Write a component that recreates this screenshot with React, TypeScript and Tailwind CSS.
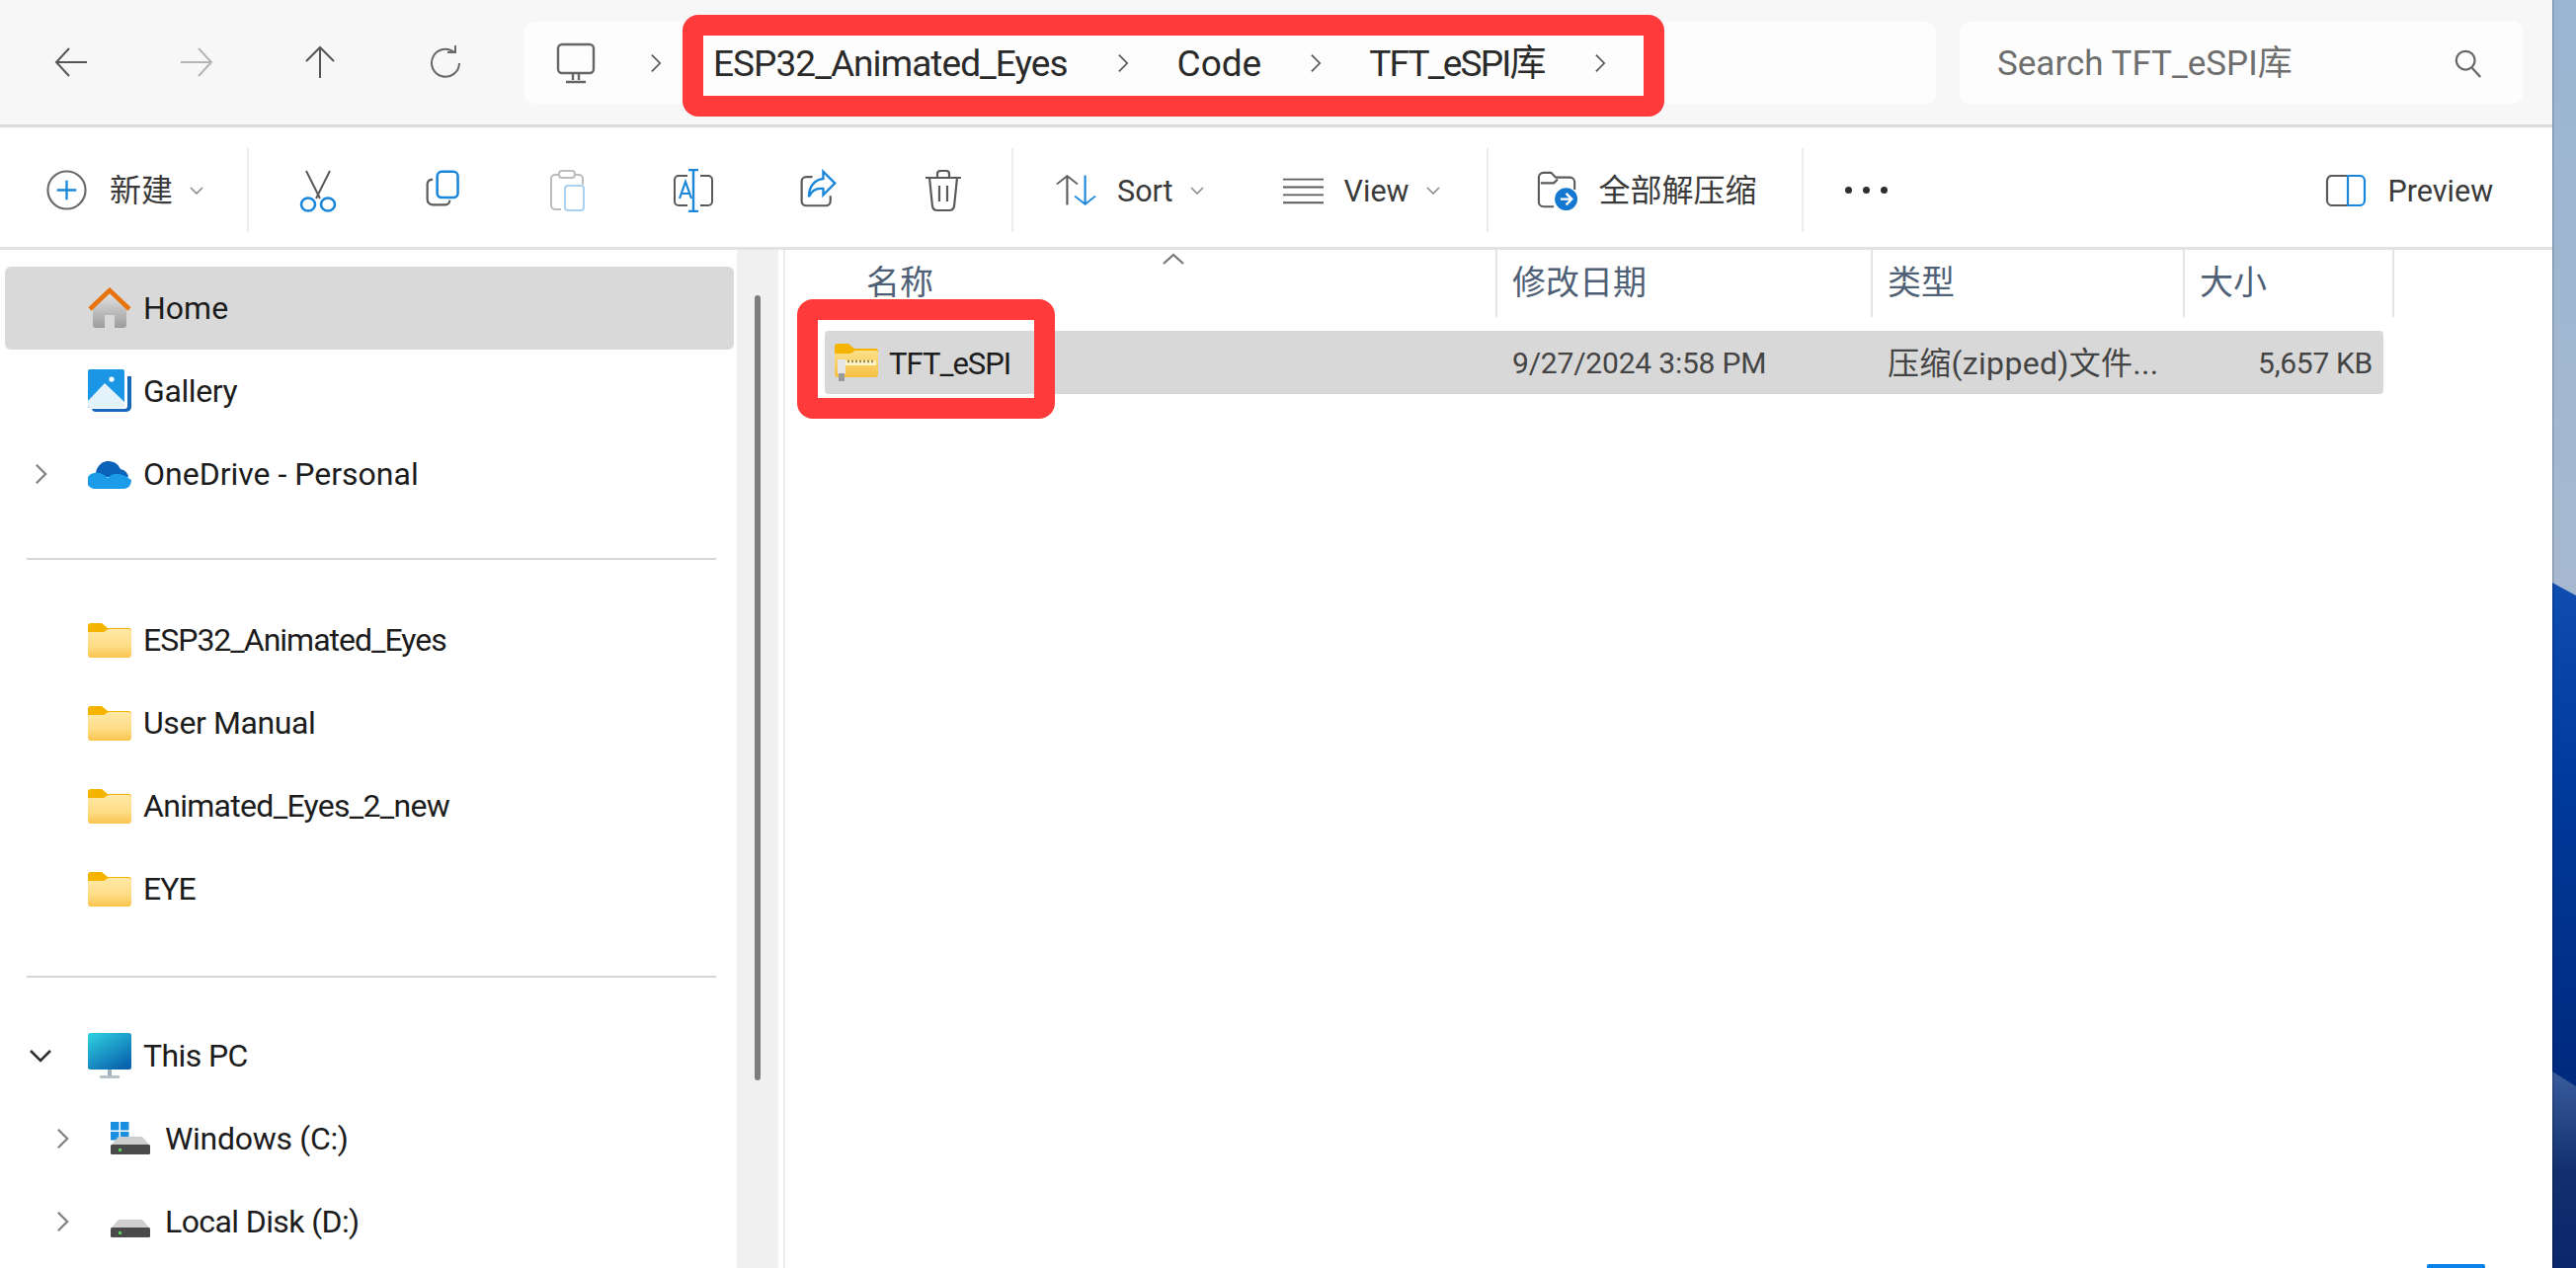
const FONT = "font-['Roboto','Noto_Sans_CJK_SC',sans-serif]";

function Chevron({ className = '', stroke = '#555', width = 2 }: { className?: string; stroke?: string; width?: number }) {
  return (
    <svg viewBox="0 0 14 24" className={className} fill="none" stroke={stroke} strokeWidth={width}>
      <path d="M2 2l10 10L2 22" />
    </svg>
  );
}

function Caret() {
  return (
    <svg viewBox="0 0 14 8" className="w-[14px] h-[8px] ml-[17px]" fill="none" stroke="#8a8a8a" strokeWidth="1.6">
      <path d="M1 1l6 6 6-6" />
    </svg>
  );
}

function FolderIcon() {
  return (
    <svg viewBox="0 0 44 35" className="w-[44px] h-[35px] shrink-0">
      <defs>
        <linearGradient id="fold" x1="0" y1="0" x2="0" y2="1">
          <stop offset="0" stopColor="#ffe9a6" />
          <stop offset="0.6" stopColor="#fedc86" />
          <stop offset="1" stopColor="#fac44e" />
        </linearGradient>
      </defs>
      <path d="M0 3a3 3 0 0 1 3-3h11l6 5h21a3 3 0 0 1 3 3v6H0z" fill="#f4b400" />
      <path d="M0 9l16 0 5-3h20a3 3 0 0 1 3 3v23a3 3 0 0 1-3 3H3a3 3 0 0 1-3-3z" fill="url(#fold)" />
    </svg>
  );
}

function HomeIcon() {
  return (
    <svg viewBox="0 0 44 42" className="w-[44px] h-[42px] shrink-0">
      <defs>
        <linearGradient id="homeb" x1="0" y1="0" x2="0" y2="1">
          <stop offset="0" stopColor="#e8e8e8" />
          <stop offset="1" stopColor="#9c9c9c" />
        </linearGradient>
      </defs>
      <path d="M22 3L5 21v17a3 3 0 0 0 3 3h9V28h10v13h9a3 3 0 0 0 3-3V21z" fill="url(#homeb)" />
      <path d="M2 22L22 3l20 19" fill="none" stroke="#e8730c" strokeWidth="4.5" />
    </svg>
  );
}

function GalleryIcon() {
  return (
    <svg viewBox="0 0 44 44" className="w-[44px] h-[44px] shrink-0">
      <path d="M4 40h33a3 3 0 0 0 3-3V7h4v31a5 5 0 0 1-5 5H8a4 4 0 0 1-4-3z" fill="#1668b8" />
      <rect x="0" y="0" width="37" height="39" rx="2" fill="#1b96e4" />
      <path d="M0 32l17-18 20 19v6H2a2 2 0 0 1-2-2z" fill="#e4f2fc" />
      <circle cx="24" cy="10" r="2.6" fill="#fff" />
    </svg>
  );
}

function CloudIcon() {
  return (
    <svg viewBox="0 0 44 30" className="w-[44px] h-[30px] shrink-0">
      <path d="M8 14a13 13 0 0 1 25-4 10 10 0 0 1 8 8H10z" fill="#0a63b8" />
      <path d="M8 30a8 8 0 0 1-2-16c6-1 10 1 14 5 5-6 14-6 24 2 0 5-3 9-8 9z" fill="#1c9ce8" />
    </svg>
  );
}

function PcIcon() {
  return (
    <svg viewBox="0 0 44 46" className="w-[44px] h-[46px] shrink-0">
      <defs>
        <linearGradient id="pc" x1="0" y1="0" x2="0.7" y2="1">
          <stop offset="0" stopColor="#30d3e0" />
          <stop offset="1" stopColor="#0a65b0" />
        </linearGradient>
      </defs>
      <rect x="0" y="0" width="44" height="37" rx="2.5" fill="url(#pc)" />
      <rect x="20" y="37" width="4" height="7" fill="#9fb3bd" />
      <rect x="12" y="43" width="20" height="3" rx="1" fill="#b5c2c9" />
    </svg>
  );
}

function DiskIcon({ win }: { win?: boolean }) {
  return (
    <svg viewBox="0 0 40 34" className="w-[40px] h-[34px] shrink-0">
      {win && (
        <g fill="#1c8ee0">
          <rect x="0" y="0" width="8.5" height="8.5" />
          <rect x="10" y="0" width="8.5" height="8.5" />
          <rect x="0" y="10" width="8.5" height="8.5" />
          <rect x="10" y="10" width="8.5" height="8.5" />
        </g>
      )}
      <path d="M8 15h24l8 9H0z" fill="#cfcfcf" />
      <rect x="0" y="23" width="40" height="10" rx="1.5" fill="#4a4a4a" />
      <rect x="8" y="27" width="3" height="3" fill="#58d058" />
    </svg>
  );
}

function ZipIcon() {
  return (
    <svg viewBox="0 0 44 38" className="w-[44px] h-[38px] shrink-0">
      <defs>
        <linearGradient id="zip" x1="0" y1="0" x2="0" y2="1">
          <stop offset="0" stopColor="#fde08a" />
          <stop offset="1" stopColor="#f6bf42" />
        </linearGradient>
      </defs>
      <path d="M0 3a3 3 0 0 1 3-3h11l6 5h21a3 3 0 0 1 3 3v6H0z" fill="#f4b400" />
      <path d="M0 10h16l5-3h20a3 3 0 0 1 3 3v21a3 3 0 0 1-3 3H3a3 3 0 0 1-3-3z" fill="url(#zip)" />
      <rect x="8" y="17" width="34" height="5" fill="#fff3c8" />
      <path d="M9 18h32" stroke="#9a8a50" strokeWidth="2.4" strokeDasharray="2 2" />
      <rect x="3" y="16" width="8" height="15" fill="#e6e6e6" />
      <rect x="4" y="30" width="6" height="8" fill="#9a9a9a" />
    </svg>
  );
}

const GRAY = '#5a5a5a';
const BLUE = '#1a86da';

function ToolIcon({ name }: { name: string }) {
  const common = 'w-[44px] h-[44px]';
  const small = 'w-[40px] h-[40px]';
  if (name === 'cut')
    return (
      <svg viewBox="0 0 44 44" className={common} fill="none" strokeWidth="2">
        <path d="M10 2l14 28M34 2L20 30" stroke={GRAY} />
        <ellipse cx="12" cy="36" rx="7" ry="6.5" stroke={BLUE} strokeWidth="2.6" />
        <ellipse cx="32" cy="36" rx="7" ry="6.5" stroke={BLUE} strokeWidth="2.6" />
      </svg>
    );
  if (name === 'copy')
    return (
      <svg viewBox="0 0 44 44" className={small} fill="none" strokeWidth="2.4">
        <path d="M10 12a5 5 0 0 0-6 5v17a6 6 0 0 0 6 6h14a5 5 0 0 0 5-5" stroke={GRAY} />
        <rect x="15" y="3" width="23" height="29" rx="5" stroke={BLUE} strokeWidth="2.8" />
      </svg>
    );
  if (name === 'paste')
    return (
      <svg viewBox="0 0 44 44" className={common} fill="none" strokeWidth="2">
        <path d="M12 6H9a4 4 0 0 0-4 4v27a4 4 0 0 0 4 4h6M30 6h3a4 4 0 0 1 4 4v6" stroke="#bcbcbc" />
        <rect x="13" y="2" width="16" height="7" rx="3" stroke="#bcbcbc" />
        <rect x="19" y="17" width="19" height="25" rx="3" stroke="#a9d2f2" />
      </svg>
    );
  if (name === 'rename')
    return (
      <svg viewBox="0 0 44 44" className={common} fill="none" strokeWidth="2">
        <path d="M16 7H7a4 4 0 0 0-4 4v22a4 4 0 0 0 4 4h9M29 7h8a4 4 0 0 1 4 4v22a4 4 0 0 1-4 4h-8" stroke={GRAY} />
        <path d="M17 1h10M22 1v42M17 43h10" stroke={BLUE} strokeWidth="2.4" />
        <path d="M8 30l6-17 6 17M10 25h8" stroke={BLUE} strokeWidth="2.2" />
      </svg>
    );
  if (name === 'share')
    return (
      <svg viewBox="0 0 44 44" className={small} fill="none" strokeWidth="2.4">
        <path d="M16 9H9a5 5 0 0 0-5 5v22a5 5 0 0 0 5 5h22a5 5 0 0 0 5-5v-6" stroke={GRAY} />
        <path d="M28 3l13 13-13 13v-7c-8-1-13 2-16 9 0-11 6-19 16-20z" stroke={BLUE} strokeWidth="2.6" />
      </svg>
    );
  if (name === 'trash')
    return (
      <svg viewBox="0 0 44 44" className={common} fill="none" stroke={GRAY} strokeWidth="2.2">
        <path d="M4 9h36M16 8V5a3 3 0 0 1 3-3h6a3 3 0 0 1 3 3v3M8 9l3 29a5 5 0 0 0 5 4h12a5 5 0 0 0 5-4l3-29M18 17v16M26 17v16" />
      </svg>
    );
  return null;
}

function Sep() {
  return <div className="w-[2px] h-[85px] bg-[#ececec] shrink-0" />;
}

function TopBar() {
  const crumb = `${FONT} mt-[2px] text-[37px] leading-none text-[#2a2a2a]`;
  return (
    <div className="h-[129px] shrink-0 flex bg-[#f7f7f7] border-b-[3px] border-[#dadada] pl-[8px]">
      <div className="w-[127px] h-[126px] flex items-center justify-center">
        <svg viewBox="0 0 34 30" className="w-[34px] h-[30px]" fill="none" stroke="#555" strokeWidth="2">
          <path d="M33 15H2M15 1L2 15l13 14" />
        </svg>
      </div>
      <div className="w-[127px] h-[126px] flex items-center justify-center">
        <svg viewBox="0 0 34 30" className="w-[34px] h-[30px]" fill="none" stroke="#b4b4b4" strokeWidth="2">
          <path d="M1 15h31M19 1l13 14-13 14" />
        </svg>
      </div>
      <div className="w-[127px] h-[126px] flex items-center justify-center pr-[4px]">
        <svg viewBox="0 0 32 34" className="w-[32px] h-[34px]" fill="none" stroke="#555" strokeWidth="2">
          <path d="M16 33V2M2 16L16 2l14 14" />
        </svg>
      </div>
      <div className="w-[127px] h-[126px] flex items-center justify-center pr-[4px]">
        <svg viewBox="0 0 32 34" className="w-[32px] h-[34px]" fill="none" stroke="#666" strokeWidth="2">
          <path d="M25 7A14 14 0 1 0 30 18" />
          <path d="M18 7h8V0" />
        </svg>
      </div>
      <div className="ml-[15px] mt-[22px] w-[1429px] h-[83px] rounded-[10px] bg-[#fdfdfd] flex items-center">
        <svg viewBox="0 0 40 42" className="w-[40px] h-[42px] ml-[32px]" fill="none" stroke="#666" strokeWidth="2.4">
          <rect x="2" y="2" width="36" height="29" rx="4" />
          <path d="M17 32v6M23 32v6M10 40h20" />
        </svg>
        <Chevron className="w-[12px] h-[20px] ml-[55px]" />
        <span className={`${crumb} ml-[52px] tracking-[-0.95px]`}>ESP32_Animated_Eyes</span>
        <Chevron className="w-[12px] h-[20px] ml-[50px]" />
        <span className={`${crumb} ml-[49px]`}>Code</span>
        <Chevron className="w-[12px] h-[20px] ml-[49px]" />
        <span className={`${crumb} ml-[48px] tracking-[-1.8px]`}>TFT_eSPI库</span>
        <Chevron className="w-[12px] h-[20px] ml-[50px]" />
      </div>
      <div className="ml-[24px] mt-[22px] w-[570px] h-[83px] rounded-[10px] bg-[#fdfdfd] flex items-center justify-between pl-[38px] pr-[40px]">
        <span className={`${FONT} mt-[2px] text-[35px] leading-none text-[#6e6e6e]`}>Search TFT_eSPI库</span>
        <svg viewBox="0 0 32 32" className="w-[30px] h-[30px]" fill="none" stroke="#666" strokeWidth="2.4">
          <circle cx="13" cy="13" r="10" />
          <path d="M20 21l9 10" />
        </svg>
      </div>
    </div>
  );
}

function ToolBar() {
  const text = `${FONT} text-[30.5px] leading-none text-[#3a3a3a]`;
  return (
    <div className="h-[124px] shrink-0 flex items-center bg-white border-b-[3px] border-[#e2e2e2] pt-[6px]">
      <svg viewBox="0 0 42 42" className="w-[41px] h-[41px] ml-[47px]" fill="none">
        <circle cx="21" cy="21" r="19.5" stroke="#6a6a6a" strokeWidth="2.2" />
        <path d="M21 11v20M11 21h20" stroke={BLUE} strokeWidth="2.4" />
      </svg>
      <span className={`${FONT} ml-[23px] text-[32px] leading-none text-[#3a3a3a]`}>新建</span>
      <Caret />
      <div className="w-[44px] shrink-0" />
      <Sep />
      <div className="flex ml-[7px]">
        {['cut', 'copy', 'paste', 'rename', 'share', 'trash'].map((n) => (
          <div key={n} className="w-[126.5px] flex justify-center">
            <ToolIcon name={n} />
          </div>
        ))}
      </div>
      <div className="ml-[6px]">
        <Sep />
      </div>
      <svg viewBox="0 0 46 44" preserveAspectRatio="none" className="w-[44px] h-[33px] ml-[42px]" fill="none" strokeWidth="2.2">
        <path d="M13 42V3M2 14L13 3l11 11" stroke={GRAY} />
        <path d="M32 2v39M21 30l11 11 11-11" stroke={BLUE} />
      </svg>
      <span className={`${text} ml-[19px] mt-[3px]`}>Sort</span>
      <Caret />
      <svg viewBox="0 0 44 32" preserveAspectRatio="none" className="w-[43px] h-[28px] ml-[79px]" fill="none" stroke={GRAY} strokeWidth="2.2">
        <path d="M1 3h42M1 12h42M1 21h42M1 30h42" />
      </svg>
      <span className={`${text} ml-[20px] mt-[3px]`}>View</span>
      <Caret />
      <div className="w-[47px] shrink-0" />
      <Sep />
      <svg viewBox="0 0 44 44" className="w-[42px] h-[42px] ml-[49px]" fill="none">
        <path d="M18 39H7a5 5 0 0 1-5-5V8a5 5 0 0 1 5-5h8l5 5h15a5 5 0 0 1 5 5v8" stroke={GRAY} strokeWidth="2.2" />
        <path d="M4 14h14l4-4" stroke={GRAY} strokeWidth="2.2" />
        <circle cx="31" cy="31" r="12" fill="#1478d0" />
        <path d="M25 31h11M31 25l6 6-6 6" stroke="#fff" strokeWidth="2.4" />
      </svg>
      <span className={`${FONT} ml-[21px] text-[32px] leading-none text-[#3a3a3a]`}>全部解压缩</span>
      <div className="ml-[45px]">
        <Sep />
      </div>
      <div className="ml-[42px] flex gap-[11px]">
        <div className="w-[7px] h-[7px] rounded-full bg-[#2e2e2e]" />
        <div className="w-[7px] h-[7px] rounded-full bg-[#2e2e2e]" />
        <div className="w-[7px] h-[7px] rounded-full bg-[#2e2e2e]" />
      </div>
      <svg viewBox="0 0 42 32" className="w-[42px] h-[32px] ml-[443px]" fill="none" strokeWidth="2.2">
        <path d="M23 1H7a5 5 0 0 0-5 5v20a5 5 0 0 0 5 5h16" stroke={GRAY} />
        <path d="M23 1h12a5 5 0 0 1 5 5v20a5 5 0 0 1-5 5H23z" stroke={BLUE} />
      </svg>
      <span className={`${text} ml-[22px] mt-[3px]`}>Preview</span>
    </div>
  );
}

function NavRow({
  label,
  icon,
  chevron,
  level = 1,
  selected,
  tracking = '',
}: {
  label: string;
  icon: React.ReactNode;
  chevron?: 'right' | 'down';
  level?: number;
  selected?: boolean;
  tracking?: string;
}) {
  return (
    <div className={`ml-[5px] w-[738px] h-[84px] flex items-center rounded-[6px] ${selected ? 'bg-[#d9d9d9]' : ''}`}>
      <div className={`${level === 2 ? 'w-[107px] pl-[52px]' : 'w-[84px] pl-[30px]'} shrink-0 flex items-center`}>
        {chevron === 'right' && <Chevron className="w-[13px] h-[26px]" stroke="#808080" width={2.4} />}
        {chevron === 'down' && (
          <svg viewBox="0 0 24 14" className="w-[24px] h-[14px] -ml-[6px]" fill="none" stroke="#2f2f2f" strokeWidth="2.6">
            <path d="M2 2l10 10L22 2" />
          </svg>
        )}
      </div>
      {icon}
      <span className={`${FONT} ${level === 2 ? 'ml-[15px]' : 'ml-[12px]'} text-[32px] leading-none text-[#1c1c1c] ${tracking}`}>{label}</span>
    </div>
  );
}

function Sidebar() {
  return (
    <div className="w-[746px] shrink-0 flex flex-col pt-[17px] bg-white">
      <NavRow label="Home" icon={<HomeIcon />} selected />
      <NavRow label="Gallery" icon={<GalleryIcon />} tracking="tracking-[-0.4px]" />
      <NavRow label="OneDrive - Personal" icon={<CloudIcon />} chevron="right" />
      <div className="ml-[27px] mr-[21px] mt-[43px] h-[2px] bg-[#d8d8d8] shrink-0" />
      <div className="mt-[39px]" />
      <NavRow label="ESP32_Animated_Eyes" icon={<FolderIcon />} tracking="tracking-[-1px]" />
      <NavRow label="User Manual" icon={<FolderIcon />} tracking="tracking-[-0.4px]" />
      <NavRow label="Animated_Eyes_2_new" icon={<FolderIcon />} tracking="tracking-[-0.7px]" />
      <NavRow label="EYE" icon={<FolderIcon />} tracking="tracking-[-1px]" />
      <div className="ml-[27px] mr-[21px] mt-[46px] h-[2px] bg-[#d8d8d8] shrink-0" />
      <div className="mt-[37px]" />
      <NavRow label="This PC" icon={<PcIcon />} chevron="down" tracking="tracking-[-0.6px]" />
      <NavRow label="Windows (C:)" icon={<DiskIcon win />} chevron="right" level={2} tracking="tracking-[-0.3px]" />
      <NavRow label="Local Disk (D:)" icon={<DiskIcon />} chevron="right" level={2} tracking="tracking-[-0.6px]" />
    </div>
  );
}

function FileList() {
  const head = `${FONT} mb-[3px] text-[34px] leading-none text-[#4f5f75]`;
  const cell = `${FONT} mt-[2px] text-[30px] leading-none text-[#444]`;
  return (
    <div className="relative flex-1 flex flex-col ml-[5px] border-l-[2px] border-[#ececec] bg-white">
      <div className="h-[68px] shrink-0 flex">
        <div className="relative w-[721px] border-r-[2px] border-[#e4e4e4] flex items-center pl-[82px]">
          <span className={head}>名称</span>
          <svg viewBox="0 0 22 12" className="absolute left-[382px] top-[3px] w-[22px] h-[12px]" fill="none" stroke="#777" strokeWidth="2.2">
            <path d="M1 11L11 2l10 9" />
          </svg>
        </div>
        <div className="w-[380px] border-r-[2px] border-[#e4e4e4] flex items-center pl-[15px]">
          <span className={head}>修改日期</span>
        </div>
        <div className="w-[316px] border-r-[2px] border-[#e4e4e4] flex items-center pl-[15px]">
          <span className={head}>类型</span>
        </div>
        <div className="w-[212px] border-r-[2px] border-[#e4e4e4] flex items-center pl-[15px]">
          <span className={head}>大小</span>
        </div>
      </div>
      <div className="mt-[14px] ml-[40px] w-[1578px] h-[64px] shrink-0 rounded-[4px] bg-[#d8d8d8] flex items-center">
        <div className="w-[696px] shrink-0 flex items-center pl-[10px]">
          <ZipIcon />
          <span className={`${FONT} ml-[11px] mt-[2px] text-[31px] leading-none tracking-[-1px] text-[#1c1c1c]`}>TFT_eSPI</span>
        </div>
        <div className={`${cell} w-[380px] shrink-0 tracking-[-0.2px]`}>9/27/2024 3:58 PM</div>
        <div className={`${FONT} mt-[2px] text-[32px] leading-none tracking-[0.3px] text-[#444] w-[290px] shrink-0`}>压缩(zipped)文件...</div>
        <div className={`${cell} flex-1 text-right pr-[11px] tracking-[-0.3px]`}>5,657 KB</div>
      </div>
    </div>
  );
}

function Wallpaper() {
  return (
    <svg viewBox="0 0 24 1284" preserveAspectRatio="none" className="w-[24px] h-[1284px] shrink-0 block">
      <defs>
        <linearGradient id="wall" x1="0" y1="590" x2="0" y2="1090" gradientUnits="userSpaceOnUse">
          <stop offset="0" stopColor="#0f4db0" />
          <stop offset="0.4" stopColor="#003a9c" />
          <stop offset="1" stopColor="#002a7e" />
        </linearGradient>
        <linearGradient id="wallb" x1="0" y1="1085" x2="0" y2="1284" gradientUnits="userSpaceOnUse">
          <stop offset="0" stopColor="#3a5c9c" />
          <stop offset="0.5" stopColor="#12306e" />
          <stop offset="1" stopColor="#09276a" />
        </linearGradient>
        <linearGradient id="wallt" x1="0" y1="0" x2="0" y2="600" gradientUnits="userSpaceOnUse">
          <stop offset="0" stopColor="#9ab5d2" />
          <stop offset="1" stopColor="#a6b9d0" />
        </linearGradient>
      </defs>
      <rect width="24" height="1284" fill="url(#wallt)" />
      <path d="M0 590L24 603V1284H0z" fill="url(#wall)" />
      <path d="M0 1085L24 1100V1284H0z" fill="url(#wallb)" />
      <rect width="1.5" height="1284" fill="#000" opacity="0.18" />
    </svg>
  );
}

export default function App() {
  return (
    <div className="relative w-[2608px] h-[1284px] overflow-hidden flex bg-white">
      <div className="w-[2584px] shrink-0 flex flex-col">
        <TopBar />
        <ToolBar />
        <div className="flex flex-1 min-h-0">
          <Sidebar />
          {/* nav pane scrollbar track */}
          <div className="w-[42px] shrink-0 bg-[#f0f0f0] pl-[18px] pt-[46px]">
            <div className="w-[6px] h-[795px] rounded-[3px] bg-[#7d7d7d]" />
          </div>
          <FileList />
        </div>
      </div>
      <Wallpaper />
      {/* red annotation boxes */}
      <div className="absolute left-[691px] top-[15px] w-[994px] h-[103px] rounded-[16px] border-[21px] border-[#fe3a3a]" />
      <div className="absolute left-[807px] top-[303px] w-[261px] h-[121px] rounded-[16px] border-[21px] border-[#fe3a3a] bg-transparent" />
      <div className="absolute left-[2457px] top-[1280px] w-[59px] h-[4px] rounded-t-[2px] bg-[#0a84e8]" />
    </div>
  );
}
